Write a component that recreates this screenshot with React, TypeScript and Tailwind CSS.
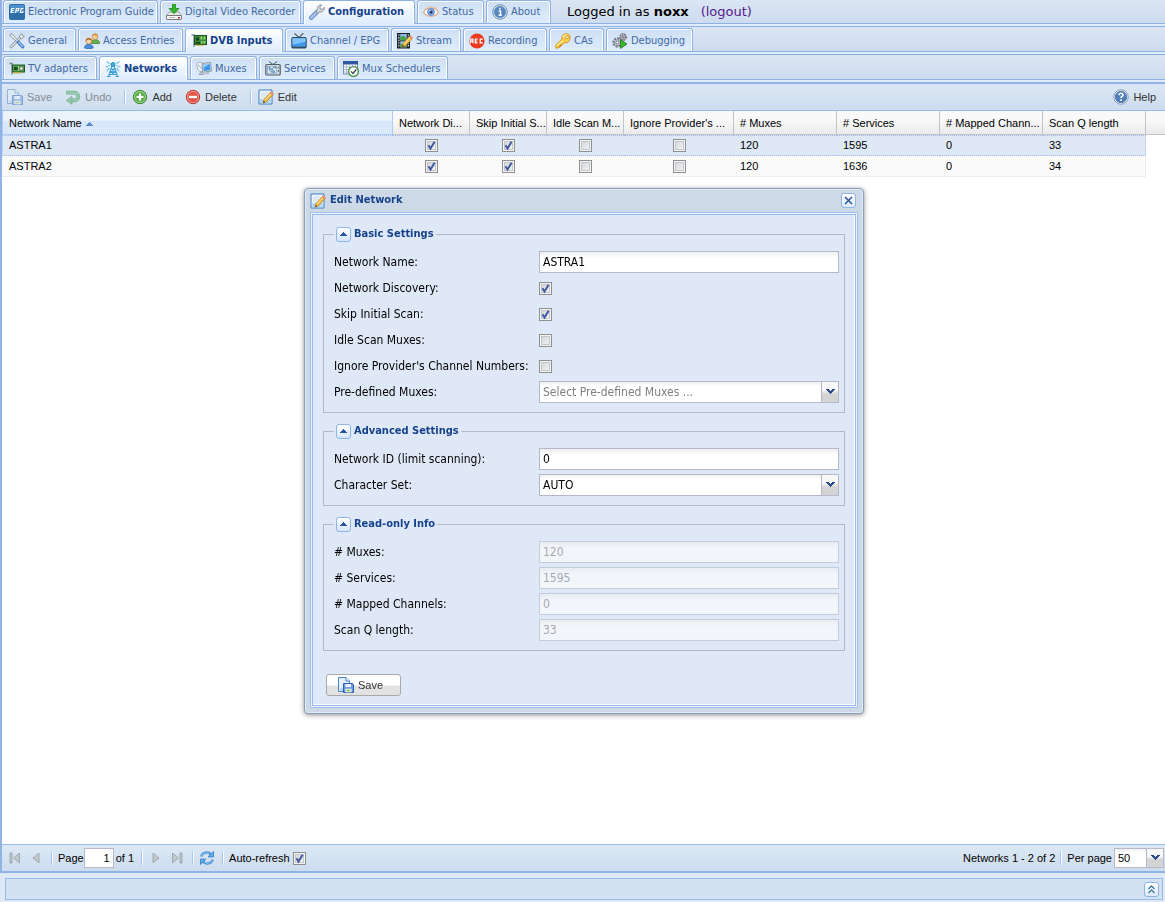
import React, { useState } from "react";

type Kids = { children?: React.ReactNode };

function Svg({ children }: Kids) {
  return (
    <svg width="16" height="16" viewBox="0 0 16 16" className="block shrink-0" aria-hidden="true">
      {children}
    </svg>
  );
}

const EpgIcon = () => (
  <Svg>
    <rect x="0.5" y="0.5" width="15" height="15" rx="1" fill="#4a90cb" stroke="#2f6ea6" />
    <rect x="1" y="9" width="14" height="6" fill="#2f6fa8" />
    <path d="M5.500 4.500H2.800L2 8.500h2.700M2.500 6.500h2.300M6.500 9l1-4.500h2.300l-.4 2.200H7.200M14.500 4.500h-2.300l-.8 4h2.300l.3-1.500" fill="none" stroke="#fff" strokeWidth="1.100" />
  </Svg>
);
const DvrIcon = () => (
  <Svg>
    <path d="M3 8h10l3 4H0z" fill="#e8e8e8" stroke="#8c8c8c" strokeWidth=".7" />
    <rect x=".5" y="11.500" width="15" height="4" rx=".6" fill="#fafafa" stroke="#777" />
    <path d="M3 13.500h6" stroke="#bbb" />
    <rect x="12" y="13" width="2" height="1.500" fill="#d22" />
    <path d="M6.500 0h3v4.500H13L8 9.700 3 4.500h3.500z" fill="#35b52c" stroke="#1d8a1a" strokeWidth=".8" />
  </Svg>
);
const WrenchIcon = () => (
  <Svg>
    <path d="M2.300 13.700l5.200-5.200" stroke="#5679ba" strokeWidth="4.400" strokeLinecap="round" />
    <path d="M2.300 13.700l5.200-5.200" stroke="#a8bfeb" strokeWidth="2.800" strokeLinecap="round" />
    <path d="M7 8.500L8.300 6.500C7.400 3.800 9.500.600 12.700.900L10.800 3l.4 2 2 .4 2-2c.6 3.200-2.600 5.400-5.200 4.600L8.600 9.700z" fill="#d9dde2" stroke="#7d858e" strokeWidth=".9" />
  </Svg>
);
const EyeIcon = () => (
  <Svg>
    <path d="M.5 8.500C3.500 2.500 12.500 2.500 15.500 8.500 12.500 13.500 3.500 13.500 .5 8.500z" fill="#fff" stroke="#dba27e" strokeWidth="1.200" />
    <path d="M1.500 5.500C5 1.500 11 1.500 14.500 5.500" fill="none" stroke="#e9c3a6" strokeWidth="1" />
    <circle cx="8" cy="8" r="3.500" fill="#7ba7ea" stroke="#5585cc" strokeWidth=".8" />
    <circle cx="8" cy="8" r="1.600" fill="#1c2d52" />
    <circle cx="7" cy="7" r=".7" fill="#fff" />
  </Svg>
);
const InfoIcon = () => (
  <Svg>
    <circle cx="8" cy="8" r="7.200" fill="#fff" stroke="#5c83b1" />
    <circle cx="8" cy="8" r="5.700" fill="#5488bf" stroke="#4272a8" strokeWidth=".6" />
    <path d="M8 3.800v1.700M6.600 7H8.500v4.300M6.500 11.300h3.300" stroke="#fff" strokeWidth="1.500" fill="none" />
  </Svg>
);
const HelpIcon = () => (
  <Svg>
    <circle cx="8" cy="8" r="7.200" fill="#fff" stroke="#7f99c2" />
    <circle cx="8" cy="8" r="5.700" fill="#5080ba" stroke="#3f6299" strokeWidth=".7" />
    <path d="M6 6.300C6 3.600 10.200 3.700 10 6.200 9.900 7.500 8 7.500 8 9M8 10.300v1.600" stroke="#fff" strokeWidth="1.600" fill="none" />
  </Svg>
);
const ToolsIcon = () => (
  <Svg>
    <path d="M2 14L12 4" stroke="#7d858e" strokeWidth="2.800" strokeLinecap="round" />
    <path d="M2 14L12 4" stroke="#e9edf0" strokeWidth="1.300" strokeLinecap="round" />
    <path d="M11 5L10.500 2.500 13 .600l.2 2.200 2.200.2-2 2.500z" fill="#edf0f2" stroke="#858c94" strokeWidth=".8" />
    <path d="M1 1.300L3 .700 9.500 8 8.200 9 1.300 3z" fill="#e8ecef" stroke="#7d858e" strokeWidth=".8" />
    <path d="M9.500 9.300l4.300 4.500" stroke="#3e73b8" strokeWidth="3.200" strokeLinecap="round" />
    <path d="M9.700 9.300l4 4.200" stroke="#9fc7f4" strokeWidth="1.400" strokeLinecap="round" />
  </Svg>
);
const UsersIcon = () => (
  <Svg>
    <path d="M7 9.500c0-3.500 8.500-4 8.500 0v1H7z" fill="#65ad4b" stroke="#3d8a2c" strokeWidth=".8" />
    <circle cx="11" cy="3.600" r="2.900" fill="#f6cf9c" stroke="#bb813e" strokeWidth=".7" />
    <path d="M8 3.500C8-.2 14-.2 14 3.300 12 3.500 11 2.300 10.300 2.300z" fill="#e0963f" />
    <path d="M.6 15c-.4-5 8.700-5 8.500 0-2 .8-6.500.8-8.500 0z" fill="#4a8ee0" stroke="#2b62b3" strokeWidth=".8" />
    <circle cx="4.800" cy="8" r="3" fill="#f8d5a8" stroke="#bb813e" strokeWidth=".7" />
    <path d="M1.700 8C1.500 4 8 4 7.900 7.500 6 7.500 5 6.500 4.300 6.500z" fill="#bd6c29" />
  </Svg>
);
const CardIcon = () => (
  <Svg>
    <path d="M.5 2H3v12" stroke="#82909a" strokeWidth="1.400" fill="none" />
    <rect x="3.500" y="2.500" width="12" height="9" fill="#3c8a3c" stroke="#1c5124" />
    <path d="M5 4.500h3v3H5zM5 9h4v1.500H5z" fill="#173b1d" />
    <path d="M9.500 3.500h1.800v3H9.500zM12.500 3.500h1.800v3h-1.800zM10 8h1.500v2.500H10zM12.500 8h1.800v2.500h-1.800z" fill="#8edb67" />
    <path d="M5 12.300h8" stroke="#d6b84b" />
  </Svg>
);
const AdapterIcon = () => (
  <Svg>
    <path d="M.5 2.500H3v11" stroke="#79858e" strokeWidth="1.400" fill="none" />
    <rect x="3.500" y="4" width="12" height="7" fill="#4fa046" stroke="#235627" />
    <path d="M5 6h3.500v3H5z" fill="#1f4725" />
    <path d="M9 5h1v5H9z" fill="#9bdb77" />
    <circle cx="12.300" cy="7.500" r="2" fill="#dce5d4" stroke="#5a6f52" />
    <path d="M5 12h8" stroke="#d9b73e" strokeWidth="1.300" strokeDasharray="2 .6" />
  </Svg>
);
const TvIcon = () => (
  <Svg>
    <path d="M3.500.500L8 4.500 12.500 0" stroke="#4f5b66" strokeWidth="1.100" fill="none" />
    <rect x=".8" y="4.500" width="14.400" height="10.500" rx="1" fill="#3f9bea" stroke="#33495e" />
    <path d="M1.500 5.200h13v3.500l-13 3z" fill="#80c3f8" />
    <path d="M1 14.300h14" stroke="#394958" strokeWidth="1.300" />
  </Svg>
);
const Pencil = () => (
  <g>
    <path d="M6 10.500L12.800 3l2.500 2.300-6.800 7.500L5 14z" fill="#f6bb42" stroke="#b8812b" strokeWidth=".8" />
    <path d="M7.200 10.800L13.700 4" stroke="#ffe9a3" />
    <path d="M12 4l1.500-1.700 2.200 2L14.300 6z" fill="#e88a78" />
    <path d="M5 14l.8-2.300 1.500 1.500z" fill="#604830" />
  </g>
);
const StreamIcon = () => (
  <Svg>
    <rect x=".5" y=".5" width="12" height="14.500" fill="#2c333b" stroke="#1c2229" />
    <path d="M3.300 1h6.400v6.300H3.300z" fill="#8fc0ef" />
    <path d="M3.300 4.500l3-2 3.400 2.800v2H3.300z" fill="#45a245" />
    <path d="M3.300 8.300h6.400v6H3.300z" fill="#8fcbee" />
    <path d="M3.300 11.500l3.400-1.400 3 2v2.200H3.300z" fill="#4ba13d" />
    <path d="M1.800 1.500v13M11.400 1.500v13" stroke="#edf1f5" strokeWidth="1.100" strokeDasharray="1.300 1.300" />
    <Pencil />
  </Svg>
);
const RecIcon = () => (
  <Svg>
    <circle cx="8" cy="8" r="7.600" fill="#ea3a20" />
    <path d="M1.700 10.200V6h2.300v2H2M3.200 8l1.200 2.200M8.600 6.200H6.300v3.600h2.300M6.300 8h2M13.800 6.200h-2.600v3.600h2.600" stroke="#fff" strokeWidth="1.200" fill="none" />
  </Svg>
);
const KeyIcon = () => (
  <Svg>
    <path d="M9.400 9.700L4.500 14.500.8 15.200V12L7 6.200C6 2 10.500-.800 13.700 1.500 17.200 5 14 10.500 9.400 9.700z" fill="#f9cf4a" stroke="#d49422" />
    <path d="M2 13l5.700-5.500M8 4c1-2 3-2.300 4.400-1.500" stroke="#fff2a8" strokeWidth="1.200" fill="none" />
    <circle cx="12" cy="4.300" r="1.400" fill="#fff" stroke="#c38522" strokeWidth=".8" />
    <path d="M4 14.500v-2h2v-2" stroke="#d18f20" fill="none" />
  </Svg>
);
const DebugIcon = () => (
  <Svg>
    <circle cx="11" cy="4" r="3" fill="#c9cbd6" stroke="#757789" strokeWidth="2" strokeDasharray="1.700 .8" />
    <circle cx="11" cy="4" r="1.100" fill="#fff" stroke="#666879" />
    <circle cx="5.500" cy="9.500" r="4" fill="#cfd0da" stroke="#77798b" strokeWidth="2.300" strokeDasharray="2 1" />
    <circle cx="5.500" cy="9.500" r="1.600" fill="#fff" stroke="#656779" />
    <path d="M8.500 6.500l6.500 4.500-6.500 4.500z" fill="#3cb52d" stroke="#217c19" strokeWidth=".8" />
  </Svg>
);
const AntennaIcon = () => (
  <Svg>
    <path d="M7 4.500L3.500 15.500M9 4.500l3.500 11M6 8h4M5 11h6M4.300 13.500h7.400M6.300 8l4.200 3-6 2.500M9.700 8l-4.200 3 6 2.500M2 15.500h3.500M10.500 15.500H14" stroke="#3aa0d8" strokeWidth="1.100" fill="none" />
    <circle cx="8" cy="3.500" r="2" fill="#45aee2" stroke="#1f86bf" />
    <path d="M5 2.800L1.500.500M4.800 4.500L.5 6M11 2.800L14.500.500M11.200 4.500L15.500 6M4.500 7L2 10M11.500 7l2.500 3" stroke="#6fbfe6" strokeWidth="1.200" />
  </Svg>
);
const MuxesIcon = () => (
  <Svg>
    <path d="M.8 3.500c0-2.600 3.400-2.500 5.200-1.500l3 3-3.500 6C2 10.500 1 7 .8 3.500z" fill="#eef2f5" stroke="#8f9ba6" strokeWidth=".8" />
    <path d="M3 13.500L5 10.500l3 3z" fill="#bcc6cf" stroke="#84919c" strokeWidth=".6" />
    <path d="M2 4l4.500 4" stroke="#9aa6b0" />
    <path d="M6 2.500L14.500 1.500l1 8.500-8.700 1.300z" fill="#d7dfe6" stroke="#778694" strokeWidth=".8" />
    <path d="M7.200 3.600l6.400-.8.8 6.100-6.500 1z" fill="#3c97ea" />
    <path d="M7.200 3.600l6.400-.8-6 4z" fill="#9bd2fb" />
    <path d="M8.500 13.500l5-.800-.5-1.500-2.500.3z" fill="#a8b4be" />
  </Svg>
);
const ServicesIcon = () => (
  <Svg>
    <path d="M4 .500L8 3.500 12 .500" stroke="#4c5965" strokeWidth="1" fill="none" />
    <rect x=".8" y="3.500" width="14.400" height="10.500" rx="1" fill="#d5dce2" stroke="#4e5d6b" strokeWidth="1.200" />
    <rect x="2.500" y="5.200" width="9" height="7" fill="#d9eaf7" stroke="#7c94a9" strokeWidth=".6" />
    <path d="M4 6c0 4 3 6 6 5zM6.500 8.500L9.500 6M9 6h1.500v1.500" fill="#b5cde2" stroke="#4779a8" strokeWidth=".9" />
    <path d="M13.300 5.500v2M13.300 9v2" stroke="#5b6976" />
  </Svg>
);
const SchedIcon = () => (
  <Svg>
    <rect x=".5" y="1.500" width="14" height="11.500" fill="#fff" stroke="#7995b6" />
    <path d="M0 0h15v3.500H0z" fill="#2f569f" />
    <path d="M1 6h13M1 8.500h13M1 11h13M3.500 4v9M6.500 4v9M9.500 4v9M12.500 4v9" stroke="#92acc9" strokeWidth=".8" />
    <circle cx="10.500" cy="10.500" r="4.900" fill="#fff" stroke="#468b42" strokeWidth="1.300" />
    <path d="M8 10.300l2 2.200 3.300-4" stroke="#39474b" strokeWidth="1.200" fill="none" />
  </Svg>
);
const SaveIcon = () => (
  <Svg>
    <path d="M.5.500H8l3.500 3.500v10.500H.5z" fill="#e4f0fc" stroke="#4b7fc3" />
    <path d="M8 .500V4h3.500" fill="#fff" stroke="#4b7fc3" />
    <path d="M2 11.500h4v2H2z" fill="#a7cdf0" />
    <path d="M5.500 6.500h9l1 1v8h-10z" fill="#6d9bdc" stroke="#2d5fae" />
    <path d="M7.500 7h5.500v3H7.500z" fill="#eef5fc" />
    <path d="M7.500 11.800h6v3.500h-6z" fill="#fff" />
    <path d="M8.500 13.500h4" stroke="#82bf48" strokeWidth="1.600" />
  </Svg>
);
const UndoIcon = () => (
  <Svg>
    <path d="M1 3.700h8.500a3.700 3.700 0 010 7.600H6" stroke="#22863d" strokeWidth="3.700" fill="none" />
    <path d="M1.800 3.700h7.700a3.700 3.700 0 010 7.600H6" stroke="#61b66c" strokeWidth="2.100" fill="none" />
    <path d="M7 7.500v7.800L1.300 11.500z" fill="#55aa61" stroke="#22863d" strokeWidth=".8" />
  </Svg>
);
const AddIcon = () => (
  <Svg>
    <circle cx="8" cy="8" r="6.700" fill="#5bae4a" stroke="#3a8735" />
    <circle cx="8" cy="8" r="5.600" fill="none" stroke="#a8d89b" strokeWidth=".9" />
    <path d="M8 4.500v7M4.500 8h7" stroke="#fff" strokeWidth="2.200" />
  </Svg>
);
const DeleteIcon = () => (
  <Svg>
    <circle cx="8" cy="8" r="6.700" fill="#e35146" stroke="#b93b31" />
    <circle cx="8" cy="8" r="5.600" fill="none" stroke="#f2a29b" strokeWidth=".9" />
    <path d="M4 8h8" stroke="#fff" strokeWidth="2.400" />
  </Svg>
);
const EditIcon = () => (
  <Svg>
    <path d="M1 1h13v14H1z" fill="#eef6fd" stroke="#3e7fc0" />
    <path d="M2 10h11v4H2z" fill="#b4d8f3" />
    <path d="M3 4h7M3 6h6M3 8h4" stroke="#c2d3e2" strokeWidth=".8" />
    <Pencil />
  </Svg>
);
const RefreshIcon = () => (
  <Svg>
    <path d="M2.300 6.500c1.300-4.500 7-5.200 9.700-2" fill="none" stroke="#3d86d3" strokeWidth="2.400" />
    <path d="M2.600 6.300c1.300-3.900 6.300-4.700 9-1.700" fill="none" stroke="#a4d4f8" strokeWidth="1" />
    <path d="M14.500 1.500v5.400H9z" fill="#6ab1ea" stroke="#3079c8" strokeWidth=".8" />
    <path d="M13.700 9.500c-1.300 4.500-7 5.200-9.700 2" fill="none" stroke="#3d86d3" strokeWidth="2.400" />
    <path d="M13.400 9.700c-1.300 3.900-6.300 4.700-9 1.700" fill="none" stroke="#a4d4f8" strokeWidth="1" />
    <path d="M1.500 14.500V9.100H7z" fill="#6ab1ea" stroke="#3079c8" strokeWidth=".8" />
  </Svg>
);
const FirstIcon = () => (
  <Svg>
    <path d="M3 3h2v10H3zM12.500 3v10l-6-5z" fill="#c3c8ce" stroke="#969da5" strokeWidth=".8" />
  </Svg>
);
const PrevIcon = () => (
  <Svg>
    <path d="M11 3v10L5 8z" fill="#c3c8ce" stroke="#969da5" strokeWidth=".8" />
  </Svg>
);
const NextIcon = () => (
  <Svg>
    <path d="M5 3v10l6-5z" fill="#c3c8ce" stroke="#969da5" strokeWidth=".8" />
  </Svg>
);
const LastIcon = () => (
  <Svg>
    <path d="M11 3h2v10h-2zM3.500 3v10l6-5z" fill="#c3c8ce" stroke="#969da5" strokeWidth=".8" />
  </Svg>
);

type TabDef = { label: string; icon: React.ReactNode; width: string; active?: boolean };

function TabStrip({ tabs, first, children }: { tabs: TabDef[]; first?: boolean } & Kids) {
  const shift = first ? "pb-0.5 " : "pt-px ";
  return (
    <nav className={first ? "shrink-0" : "shrink-0 border-t border-[#8db2e3] pt-px bg-[#d5e2f2]"}>
      <div className="flex items-start gap-0.5 h-6 pl-px border-b border-[#8db2e3] bg-gradient-to-b from-[#dbe6f4] to-[#cddbee]">
        {tabs.map((t) => (
          <a
            key={t.label}
            href="#"
            className={
              "flex shrink-0 items-center gap-[3px] whitespace-nowrap rounded-t-[3px] border border-b-0 border-[#8db2e3] pl-[5px] text-[11px] leading-4 shadow-[inset_1px_1px_0_#fff,inset_-1px_0_0_#fff] " +
              (t.active
                ? "relative h-6 bg-gradient-to-b from-white to-[#deecfd] font-bold text-[#15428b] " + (first ? shift : "")
                : "h-[23px] bg-gradient-to-b from-[#cfdff3] to-[#deecfd] text-[#416aa3] " + (first ? "" : shift)) +
              t.width
            }
          >
            {t.icon}
            {t.label}
          </a>
        ))}
        {children}
      </div>
      <div className="h-0.5 bg-[#deecfd]" />
    </nav>
  );
}

function Check({ on, label, id }: { on?: boolean; label?: string; id?: string }) {
  return (
    <span className="relative inline-block h-[13px] w-[13px] shrink-0 align-top">
      <input
        id={id}
        type="checkbox"
        defaultChecked={on}
        aria-label={label}
        className="peer block h-[13px] w-[13px] appearance-none border border-[#8e8f8f] bg-gradient-to-br from-[#cdd0d6] to-[#fafafa] shadow-[inset_0_0_0_1px_#f4f4f4,inset_0_0_0_2px_#c3c6cc]"
      />
      <svg viewBox="0 0 13 13" className="pointer-events-none absolute inset-0 hidden peer-checked:block" aria-hidden="true">
        <path d="M3.500 6.200L5.500 9.500 9.600 2.800" fill="none" stroke="#4159a0" strokeWidth="2" />
      </svg>
    </span>
  );
}

function Combo({ id, options, muted, small }: { id: string; options: string[]; muted?: boolean; small?: boolean }) {
  return (
    <span className={"relative block " + (small ? "w-[50px]" : "min-w-0 flex-1")}>
      <select
        id={id}
        className={
          "block w-full appearance-none rounded-none border border-[#b5b8c8] bg-white bg-gradient-to-b from-[#eeefef] to-white to-20% pl-[3px] pr-5 outline-none " +
          (small ? "h-5 text-[11px] " : "h-[22px] text-[12px] ") +
          (muted ? "text-[#808080]" : "text-black")
        }
      >
        {options.map((o) => (
          <option key={o}>{o}</option>
        ))}
      </select>
      <span className="pointer-events-none absolute inset-y-0 right-0 flex w-[18px] items-center justify-center border border-[#b5b8c8] bg-gradient-to-b from-[#f8f8f8] from-40% to-[#d4d4d4] to-60%">
        <svg width="9" height="6" viewBox="0 0 9 6" aria-hidden="true">
          <path d="M0 0h3v1h1v1h1V1h1V0h3v1H8v1H7v1H6v1H5v1H4V4H3V3H2V2H1V1H0z" fill="#284a8c" />
        </svg>
      </span>
    </span>
  );
}

function Row({ label, id, children }: { label: string; id: string } & Kids) {
  return (
    <div className="flex h-[22px] items-center">
      <label htmlFor={id} className="w-[205px] shrink-0 whitespace-nowrap leading-[22px]">
        {label}
      </label>
      {children}
    </div>
  );
}

function TextRow({ label, id, value, disabled }: { label: string; id: string; value: string; disabled?: boolean }) {
  return (
    <Row label={label} id={id}>
      <input
        id={id}
        defaultValue={value}
        disabled={disabled}
        className="h-[22px] min-w-0 flex-1 border border-[#b5b8c8] bg-white bg-gradient-to-b from-[#eeefef] to-white to-30% px-[3px] text-black outline-none disabled:opacity-60 disabled:text-[#808080]"
      />
    </Row>
  );
}

function Group({ title, children }: { title: string } & Kids) {
  const [open, setOpen] = useState(true);
  return (
    <fieldset className="min-w-0 border border-[#b5b8c8] pb-[9px] pl-[10px] pr-[5px]">
      <legend className="flex h-4 items-center gap-[3px] px-0.5 text-[11px] font-bold text-[#15428b]">
        <button
          type="button"
          aria-label={"Toggle " + title}
          onClick={() => setOpen(!open)}
          className="flex h-[15px] w-[15px] items-center justify-center rounded-[3px] border border-[#8fb5e6] bg-gradient-to-b from-white to-[#d5e6fb]"
        >
          <svg width="7" height="4" viewBox="0 0 7 4" aria-hidden="true">
            <path d="M3 0h1v1h1v1h1v1h1v1H0V3h1V2h1V1h1z" fill="#2b54a0" />
          </svg>
        </button>
        {title}
      </legend>
      {open && <div className="flex flex-col gap-1 pt-[9px]">{children}</div>}
    </fieldset>
  );
}

function ToolButton({ icon, label, disabled }: { icon: React.ReactNode; label: string; disabled?: boolean }) {
  return (
    <button type="button" disabled={disabled} className="mr-[13px] flex items-center gap-1 text-[#333] disabled:opacity-50">
      {icon}
      {label}
    </button>
  );
}

const Sep = () => <span className="h-[14px] w-0.5 shrink-0 border-l border-r border-l-[#98c8ff] border-r-white" />;

const topTabs: TabDef[] = [
  { label: "Electronic Program Guide", icon: <EpgIcon />, width: "w-[155px]" },
  { label: "Digital Video Recorder", icon: <DvrIcon />, width: "w-[141px]" },
  { label: "Configuration", icon: <WrenchIcon />, width: "w-[112px]", active: true },
  { label: "Status", icon: <EyeIcon />, width: "w-[67px]" },
  { label: "About", icon: <InfoIcon />, width: "w-[65px]" },
];
const configTabs: TabDef[] = [
  { label: "General", icon: <ToolsIcon />, width: "w-[73px]" },
  { label: "Access Entries", icon: <UsersIcon />, width: "w-[105px]" },
  { label: "DVB Inputs", icon: <CardIcon />, width: "w-[98px]", active: true },
  { label: "Channel / EPG", icon: <TvIcon />, width: "w-[104px]" },
  { label: "Stream", icon: <StreamIcon />, width: "w-[70px]" },
  { label: "Recording", icon: <RecIcon />, width: "w-[84px]" },
  { label: "CAs", icon: <KeyIcon />, width: "w-[55px]" },
  { label: "Debugging", icon: <DebugIcon />, width: "w-[87px]" },
];
const dvbTabs: TabDef[] = [
  { label: "TV adapters", icon: <AdapterIcon />, width: "w-[94px]" },
  { label: "Networks", icon: <AntennaIcon />, width: "w-[89px]", active: true },
  { label: "Muxes", icon: <MuxesIcon />, width: "w-[67px]" },
  { label: "Services", icon: <ServicesIcon />, width: "w-[76px]" },
  { label: "Mux Schedulers", icon: <SchedIcon />, width: "w-[111px]" },
];

const columns = [
  { title: "Network Name", short: "Network Name", width: "" },
  { title: "Network Discovery", short: "Network Di...", width: "w-[77px]" },
  { title: "Skip Initial Scan", short: "Skip Initial S...", width: "w-[77px]" },
  { title: "Idle Scan Muxes", short: "Idle Scan M...", width: "w-[77px]" },
  { title: "Ignore Provider's Channel Numbers", short: "Ignore Provider's ...", width: "w-[110px]" },
  { title: "# Muxes", short: "# Muxes", width: "w-[103px]" },
  { title: "# Services", short: "# Services", width: "w-[103px]" },
  { title: "# Mapped Channels", short: "# Mapped Chann...", width: "w-[103px]" },
  { title: "Scan Q length", short: "Scan Q length", width: "w-[103px]" },
];
const networks = [
  { name: "ASTRA1", flags: [true, true, false, false], counts: [120, 1595, 0, 33], selected: true },
  { name: "ASTRA2", flags: [true, true, false, false], counts: [120, 1636, 0, 34], selected: false },
];

function NetworkTable() {
  return (
    <table className="w-full table-fixed border-separate border-spacing-0 text-[11px] leading-[13px] text-black">
      <thead>
        <tr className="h-6">
          {columns.map((c, i) => (
            <th
              key={c.title}
              title={c.title}
              className={
                "whitespace-nowrap border-b border-r pl-1.5 pt-0.5 text-left font-normal " +
                (i === 0
                  ? "border-l border-[#aaccf6] bg-gradient-to-b from-[#ebf3fd] from-40% to-[#d9e8fb] to-45% "
                  : "border-[#c5c5c5] bg-gradient-to-b from-[#f9f9f9] from-40% to-[#e9eaec] ") +
                c.width
              }
            >
              {c.short}
              {i === 0 && (
                <svg width="7" height="4" viewBox="0 0 7 4" className="ml-1 inline-block" aria-hidden="true">
                  <path d="M3 0h1v1h1v1h1v1h1v1H0V3h1V2h1V1h1z" fill="#5b8cc9" />
                </svg>
              )}
            </th>
          ))}
          <th className="w-[19px] border-b border-[#c5c5c5] bg-gradient-to-b from-[#f9f9f9] from-40% to-[#e9eaec]" />
        </tr>
      </thead>
      <tbody>
        {networks.map((n) => {
          const cell = n.selected
            ? "border-y border-dotted border-[#a3bae9] bg-[#dfe8f6] px-1.5 first:border-l"
            : "border-b border-[#ededed] bg-[#fafafa] px-1.5 first:pl-[7px]";
          return (
            <tr key={n.name} className="h-[21px]">
              <td className={cell}>{n.name}</td>
              {n.flags.map((f, i) => (
                <td key={columns[i + 1].title} className={cell + " text-center"}>
                  <Check on={f} label={n.name + " " + columns[i + 1].title} />
                </td>
              ))}
              {n.counts.map((v, i) => (
                <td key={columns[i + 5].title} className={cell + (i === 3 ? " border-r" : "")}>
                  {v}
                </td>
              ))}
              <td />
            </tr>
          );
        })}
      </tbody>
    </table>
  );
}

function EditDialog() {
  return (
    <div className="pointer-events-none fixed inset-0 flex items-center justify-center pl-[3px]">
      <section
        role="dialog"
        aria-label="Edit Network"
        className="pointer-events-auto w-[560px] rounded-[4px] border border-[#8ba0bd] bg-[#ced9e7] px-[5px] pb-[5px] shadow-[0_1px_5px_rgba(0,0,0,0.45),inset_0_0_0_1px_#e3ebf5]"
      >
        <header className="flex h-[23px] items-center gap-1 pr-0.5 text-[11px] font-bold text-[#15428b]">
          <EditIcon />
          <h1 className="flex-1">Edit Network</h1>
          <button
            type="button"
            aria-label="Close"
            className="flex h-[15px] w-[15px] items-center justify-center rounded-[3px] border border-[#8fb5e6] bg-gradient-to-b from-white to-[#dceafb]"
          >
            <svg width="9" height="9" viewBox="0 0 9 9" aria-hidden="true">
              <path d="M1 1l7 7M8 1L1 8" stroke="#2b54a0" strokeWidth="1.500" />
            </svg>
          </button>
        </header>
        <div className="border border-[#a3bfec] bg-[#ebf2fc] p-px">
          <form className="border border-[#99bbe8] bg-[#dfe8f6] px-[10px] pb-[9px] pt-[11px] text-[12px] text-black shadow-[inset_-1px_-1px_0_#fff]">
            <div className="flex flex-col gap-[10px]">
              <Group title="Basic Settings">
                <TextRow label="Network Name:" id="name" value="ASTRA1" />
                <Row label="Network Discovery:" id="discovery">
                  <Check id="discovery" on />
                </Row>
                <Row label="Skip Initial Scan:" id="skip">
                  <Check id="skip" on />
                </Row>
                <Row label="Idle Scan Muxes:" id="idle">
                  <Check id="idle" />
                </Row>
                <Row label="Ignore Provider's Channel Numbers:" id="ignore">
                  <Check id="ignore" />
                </Row>
                <Row label="Pre-defined Muxes:" id="muxes">
                  <Combo id="muxes" options={["Select Pre-defined Muxes ..."]} muted />
                </Row>
              </Group>
              <Group title="Advanced Settings">
                <TextRow label="Network ID (limit scanning):" id="nid" value="0" />
                <Row label="Character Set:" id="charset">
                  <Combo id="charset" options={["AUTO"]} />
                </Row>
              </Group>
              <Group title="Read-only Info">
                <TextRow label="# Muxes:" id="ro-muxes" value="120" disabled />
                <TextRow label="# Services:" id="ro-services" value="1595" disabled />
                <TextRow label="# Mapped Channels:" id="ro-mapped" value="0" disabled />
                <TextRow label="Scan Q length:" id="ro-scanq" value="33" disabled />
              </Group>
            </div>
            <button
              type="button"
              className="ml-[3px] mt-[23px] flex h-[22px] w-[75px] items-center gap-1 rounded-[3px] border border-[#a9a9a9] bg-gradient-to-b from-white from-50% to-[#e2e2e2] to-55% pl-[11px] font-['Liberation_Sans',Arial,sans-serif] text-[11px] text-[#333]"
            >
              <SaveIcon />
              Save
            </button>
          </form>
        </div>
      </section>
    </div>
  );
}

export default function App() {
  return (
    <div className="flex min-h-screen flex-col bg-[#dfe8f6] font-['DejaVu_Sans_Condensed','DejaVu_Sans',sans-serif]">
      <div className="flex flex-1 flex-col border-b-2 border-l-2 border-[#8fb3e4]">
        <TabStrip tabs={topTabs} first>
          <p className="ml-[14px] flex gap-3 whitespace-nowrap font-['DejaVu_Sans',sans-serif] text-[13px] leading-6 text-black">
            <span>
              Logged in as <b>noxx</b>
            </span>
            <a href="#" className="text-[#551a8b]">
              (logout)
            </a>
          </p>
        </TabStrip>
        <TabStrip tabs={configTabs} />
        <TabStrip tabs={dvbTabs} />
        <main className="flex flex-1 flex-col border-t-2 border-[#8fb3e4] bg-white font-['Liberation_Sans',Arial,sans-serif] text-[11px]">
          <div className="flex h-[27px] shrink-0 items-center border-b border-[#99bbe8] bg-gradient-to-b from-[#dce8f4] to-[#cddcee] pl-[5px]">
            <ToolButton icon={<SaveIcon />} label="Save" disabled />
            <ToolButton icon={<UndoIcon />} label="Undo" disabled />
            <Sep />
            <span className="w-1.5" />
            <ToolButton icon={<AddIcon />} label="Add" />
            <ToolButton icon={<DeleteIcon />} label="Delete" />
            <Sep />
            <span className="w-1.5" />
            <ToolButton icon={<EditIcon />} label="Edit" />
            <span className="flex-1" />
            <button type="button" className="mr-[9px] flex items-center gap-1 text-[#333]">
              <HelpIcon />
              Help
            </button>
          </div>
          <div className="flex-1">
            <NetworkTable />
          </div>
          <footer className="flex h-[27px] shrink-0 items-center border-t border-[#99bbe8] bg-gradient-to-b from-[#dce8f4] to-[#cddcee] pl-[5px] text-black">
            <button type="button" aria-label="First page" className="mr-[5px]">
              <FirstIcon />
            </button>
            <button type="button" aria-label="Previous page" className="mr-[7px]">
              <PrevIcon />
            </button>
            <Sep />
            <label htmlFor="page" className="ml-[5px]">
              Page
            </label>
            <input id="page" defaultValue="1" className="mr-0.5 h-5 w-[30px] border border-[#b5b8c8] bg-white pr-[3px] text-right outline-none" />
            <span className="mr-[7px]">of 1</span>
            <Sep />
            <button type="button" aria-label="Next page" className="ml-[5px] mr-[5px]">
              <NextIcon />
            </button>
            <button type="button" aria-label="Last page" className="mr-[7px]">
              <LastIcon />
            </button>
            <Sep />
            <button type="button" aria-label="Refresh" className="ml-[5px] mr-[7px]">
              <RefreshIcon />
            </button>
            <Sep />
            <label htmlFor="auto" className="ml-[5px] mr-[3px]">
              Auto-refresh
            </label>
            <Check id="auto" on />
            <span className="flex-1" />
            <span className="mr-[5px]">Networks 1 - 2 of 2</span>
            <Sep />
            <label htmlFor="per" className="ml-[5px] mr-0.5">
              Per page
            </label>
            <Combo id="per" options={["50"]} small />
            <span className="w-px" />
          </footer>
        </main>
      </div>
      <div className="pb-0.5 pl-[5px] pr-0.5 pt-[5px]">
        <div className="flex h-[22px] items-center justify-end border border-[#99bbe8] bg-[#d3e1f1] pr-[3px]">
          <button
            type="button"
            aria-label="Expand log"
            className="flex h-[15px] w-[15px] items-center justify-center rounded-[3px] border border-[#8fb5e6] bg-gradient-to-b from-white to-[#dceafb]"
          >
            <svg width="9" height="9" viewBox="0 0 9 9" fill="none" aria-hidden="true">
              <path d="M1.500 4l3-3 3 3M1.500 8l3-3 3 3" stroke="#3f7a9f" strokeWidth="1.300" />
            </svg>
          </button>
        </div>
      </div>
      <EditDialog />
    </div>
  );
}
